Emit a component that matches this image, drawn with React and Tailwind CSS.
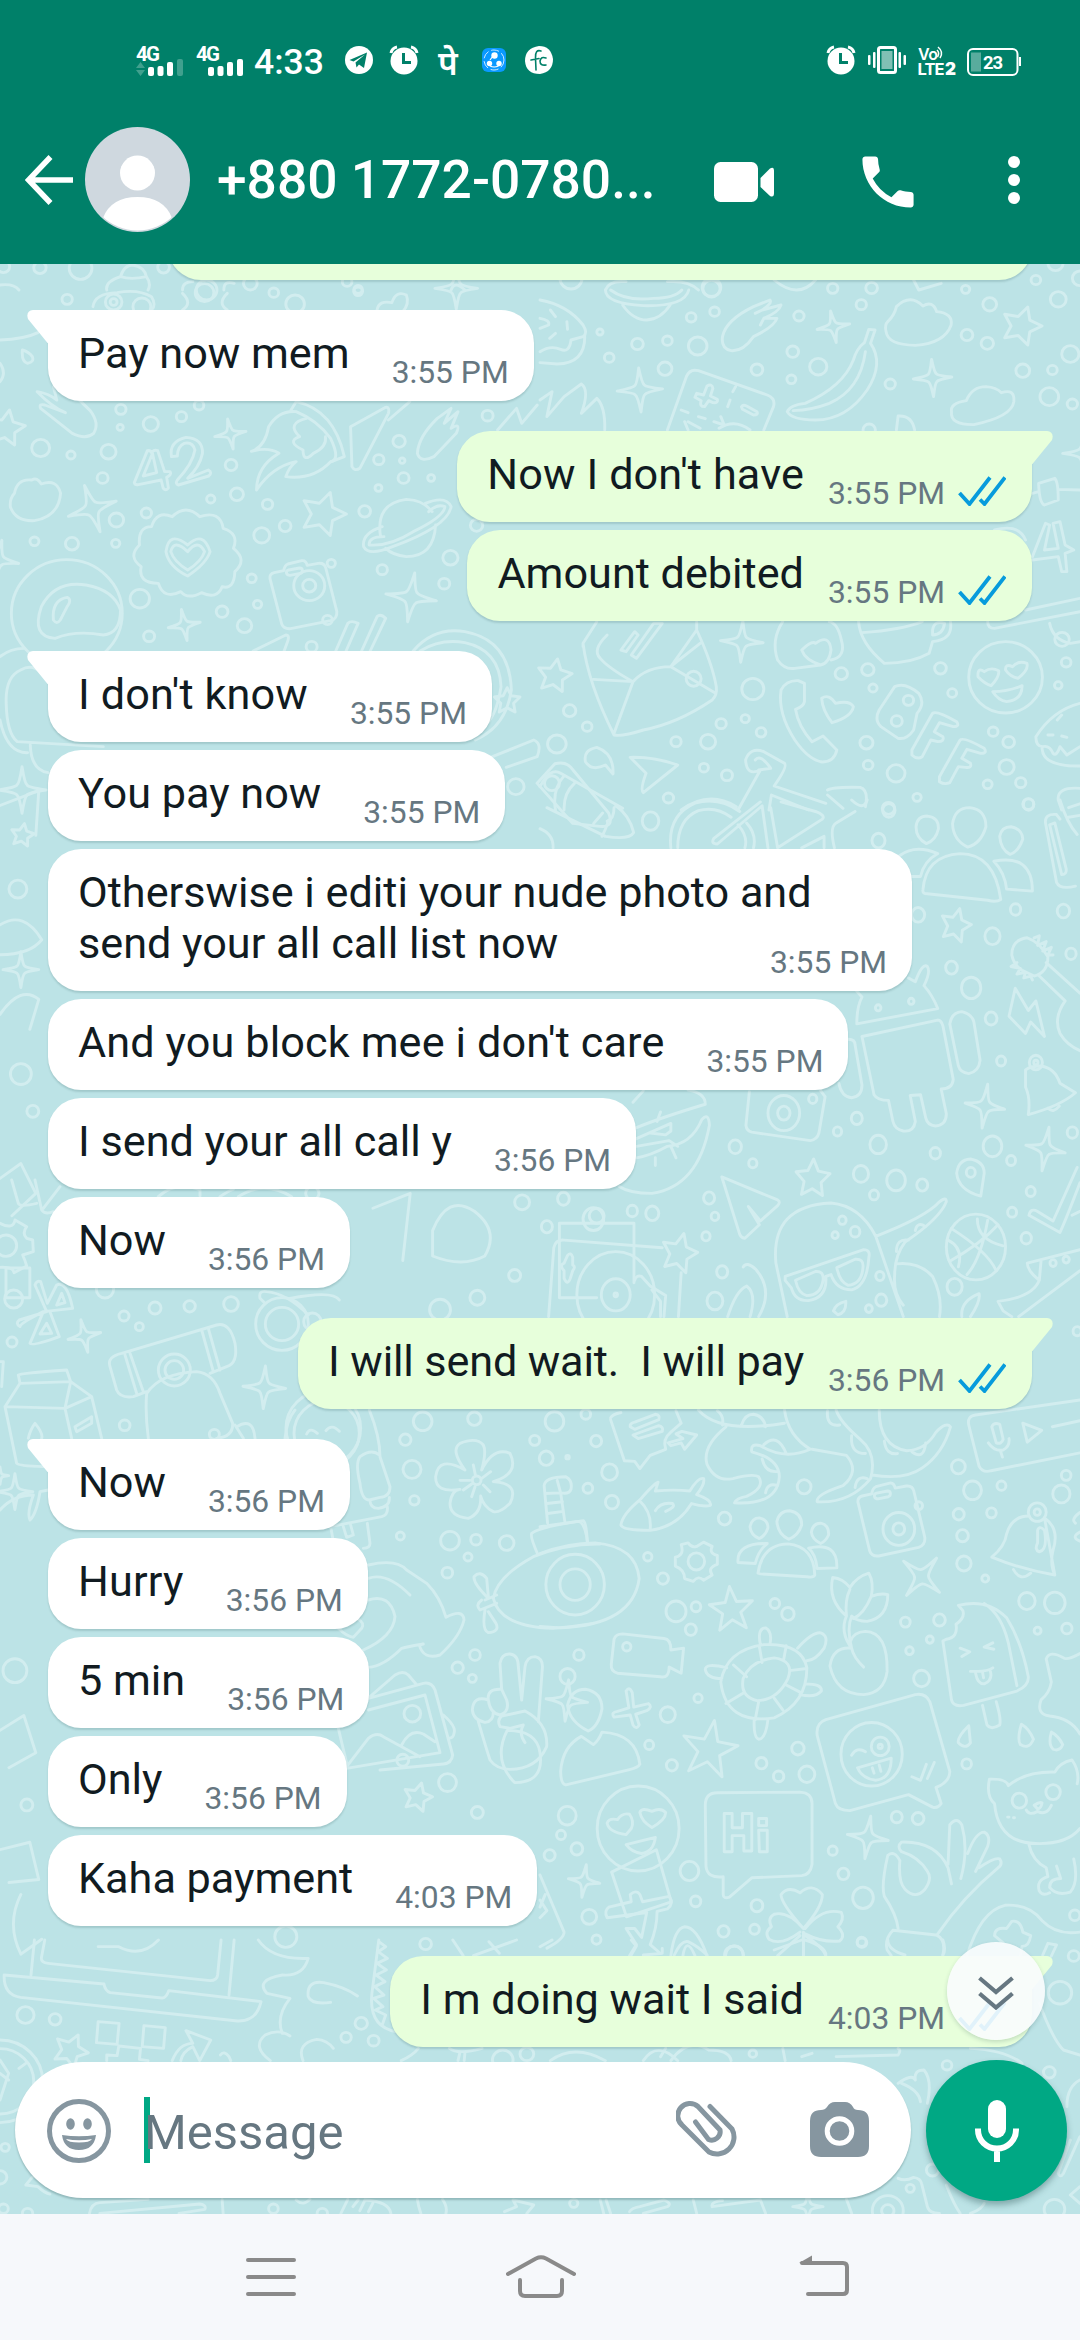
import React from "react";
import clsx from "clsx";

const messages = [
  { id: 1, out: true, hidden: true },
  { id: 2, text: "Pay now mem", time: "3:55 PM", first: true },
  { id: 3, out: true, text: "Now I don't have", time: "3:55 PM", first: true, tracking: "tracking-[0.13px]" },
  { id: 4, out: true, text: "Amount debited", time: "3:55 PM" },
  { id: 5, text: "I don't know", time: "3:55 PM", first: true, tracking: "tracking-[0.13px]" },
  { id: 6, text: "You pay now", time: "3:55 PM" },
  { id: 7, text: "Otherswise i editi your nude photo and\nsend your all call list now", time: "3:55 PM", wide: true },
  { id: 8, text: "And you block mee i don't care", time: "3:55 PM", tracking: "tracking-[0.12px]" },
  { id: 9, text: "I send your all call y", time: "3:56 PM" },
  { id: 10, text: "Now", time: "3:56 PM" },
  { id: 11, out: true, text: "I will send wait.  I will pay", time: "3:56 PM", first: true, tracking: "tracking-[-0.13px]" },
  { id: 12, text: "Now", time: "3:56 PM", first: true },
  { id: 13, text: "Hurry", time: "3:56 PM", tracking: "tracking-[0.2px]" },
  { id: 14, text: "5 min", time: "3:56 PM" },
  { id: 15, text: "Only", time: "3:56 PM" },
  { id: 16, text: "Kaha payment", time: "4:03 PM" },
  { id: 17, out: true, text: "I m doing wait I said", time: "4:03 PM", first: true },
];

/* ---------- wallpaper ---------- */

const starPath = (x, y, r, rot = 0, inner = 0.5) => {
  const pts = [];
  for (let i = 0; i < 10; i++) {
    const a = ((rot - 90 + i * 36) * Math.PI) / 180;
    const d = i % 2 ? r * inner : r;
    pts.push(`${(x + Math.cos(a) * d).toFixed(1)} ${(y + Math.sin(a) * d).toFixed(1)}`);
  }
  return `M${pts.join("L")}Z`;
};

const sparkPath = (x, y, r, rot = 0) => {
  const at = (deg, d) => {
    const a = ((rot + deg - 90) * Math.PI) / 180;
    return `${(x + Math.cos(a) * d).toFixed(1)} ${(y + Math.sin(a) * d).toFixed(1)}`;
  };
  let d = `M${at(0, r)}`;
  for (let i = 0; i < 4; i++) d += `Q${at(i * 90 + 22, r * 0.3)} ${at(i * 90 + 45, r * 0.3)}Q${at(i * 90 + 68, r * 0.3)} ${at(i * 90 + 90, r)}`;
  return d + "Z";
};

const Zone = ({ x, y, sx = 1 / 2.904, sy = 1 / 3, rings = [], stars = [], sparks = [], paths = [] }) => (
  <g transform={`translate(${x} ${y}) scale(${sx} ${sy})`}>
    {rings.map(([cx, cy, r], i) => (
      <circle key={i} cx={cx} cy={cy} r={r} vectorEffect="non-scaling-stroke" />
    ))}
    {stars.map((s, i) => (
      <path key={i} d={starPath(...s)} vectorEffect="non-scaling-stroke" />
    ))}
    {sparks.map((s, i) => (
      <path key={i} d={sparkPath(...s)} vectorEffect="non-scaling-stroke" />
    ))}
    {paths.map((d, i) => (
      <path key={i} d={d} vectorEffect="non-scaling-stroke" />
    ))}
  </g>
);

const cameraPath =
  "M0 32Q-2 18 12 14L40 8Q42 -8 52 -12L92 -22Q104 -24 108 -8L140 -14Q158 -16 162 0L194 130Q196 152 176 158L60 182Q40 184 34 168ZM48 16Q46 8 54 6L86 0Q94 0 94 8Q94 14 88 16L58 22Q50 22 48 16Z";

const Wallpaper = () => (
  <svg className="absolute inset-0 h-[1950px] w-[1080px]" viewBox="0 264 1080 1950" fill="none" stroke="#d2edef" strokeWidth="2.9" strokeLinecap="round" strokeLinejoin="round">
    <Zone
      x={0}
      y={290}
      rings={[[195, 28, 15], [594, 8, 27], [795, 8, 14], [857, 42, 27], [1040, 4, 13], [351, 358, 15], [349, 412, 9], [438, 402, 22], [527, 380, 15], [578, 346, 14], [118, 474, 26], [206, 495, 12], [315, 485, 22], [298, 564, 16], [671, 525, 17], [688, 613, 19], [612, 627, 12], [1159, 454, 18], [1100, 509, 15], [1168, 512, 8], [1172, 564, 16], [1099, 594, 10], [1252, 564, 10], [1416, 377, 16], [425, 669, 15], [338, 690, 21], [777, 643, 15], [760, 736, 23], [828, 708, 17], [1059, 664, 17], [100, 754, 13], [209, 761, 19], [336, 760, 12], [731, 865, 13], [1110, 839, 15], [1308, 803, 22], [1290, 881, 16], [406, 926, 28], [645, 965, 17], [748, 943, 12], [710, 1007, 21], [433, 1039, 16], [951, 990, 14], [905, 1070, 16], [962, 820, 12], [898, 887, 19], [898, 887, 45], [1384, 706, 18], [1498, 1490, 24], [330, 36, 24], [330, 36, 10], [412, 50, 26], [194, 970, 161]]}
      stars={[[18, 415, 56, 10], [938, 672, 68, 18]]}
      sparks={[[1325, -5, 62, 0], [669, 432, 46, -10], [268, 656, 73, -18], [535, 1005, 47, -10], [1194, 922, 74, 8], [64, 1500, 70, 0], [-5, 810, 60, 10]]}
      paths={[
        "M0 150Q70 148 110 128",
        "M65 180Q62 215 80 220Q100 216 94 200Q85 186 65 180ZM0 220Q20 250 0 275",
        "M270 50Q275 10 340 8Q400 -4 440 20Q455 45 440 60",
        "M530 10Q560 40 530 60M660 10Q630 40 660 60",
        "M1095 60Q1100 30 1138 38Q1150 0 1180 15Q1190 40 1170 65",
        "M108 305Q140 310 165 330L155 290M118 355Q112 340 130 345L190 368Q150 350 108 305M118 355L210 430Q250 450 272 430Q290 400 262 362L220 320",
        "M428 482L390 578Q392 586 402 584L468 570L474 595Q482 604 489 594L484 562Q500 554 494 545L478 545L458 482Q448 478 442 486L455 548L416 558L442 492Q438 480 428 482Z",
        "M498 500Q490 455 540 442Q590 445 588 490Q580 530 545 565L605 540Q618 548 606 558L518 585Q508 582 515 570Q560 520 566 480Q560 455 535 460Q515 470 515 498Z",
        "M745 600Q745 530 810 490Q780 470 730 484Q770 470 780 410Q810 360 860 365Q920 390 960 445Q990 510 960 515Q910 570 830 560Q840 530 860 515Q790 530 745 600Z",
        "M890 385Q830 400 870 440Q830 455 880 480Q880 520 910 490Q950 470 945 440M845 360L860 335Q970 360 1000 500L962 515",
        "M1018 410L1120 352Q1132 350 1128 370L1045 535Q1030 545 1022 530ZM1128 390L1190 335M1445 420L1500 355L1515 400L1560 345",
        "M1212 490Q1215 440 1270 385L1310 355L1290 400L1330 365L1310 415Q1340 395 1325 430L1260 500Q1220 520 1212 490Z",
        "M42 610Q50 565 92 570Q108 560 120 582Q165 565 176 610Q170 680 100 692Q45 695 30 650Q28 625 42 610Z",
        "M500 680Q540 640 580 680Q640 660 648 715Q695 730 678 775Q720 810 682 845Q680 900 645 890Q630 930 585 908Q545 930 525 905Q475 930 460 880Q400 880 410 830Q370 800 405 765Q400 710 440 710Q455 660 500 680Z",
        "M545 765Q590 720 610 785Q600 820 545 858Q490 830 482 785Q490 720 545 765ZM545 785Q575 745 594 785Q585 815 545 840Q505 815 496 785Q505 745 545 785Z",
        "M1105 740Q1090 640 1180 628Q1230 630 1255 665M1265 705Q1260 800 1180 800Q1140 795 1120 775M1110 710Q1050 730 1056 770Q1070 800 1140 770Q1300 710 1310 650Q1295 615 1235 640M1115 740Q1070 740 1072 765Q1130 770 1200 725Q1290 680 1292 650Q1270 640 1245 665",
        "M160 1045Q90 1040 120 950Q160 870 250 885Q330 900 350 960Q350 1030 300 1035Q220 1020 160 1045ZM155 990Q150 930 195 922Q210 930 195 950L175 990Q165 1005 155 990Z",
        "M0 1100Q30 1075 70 1075M60 1140Q95 1120 120 1150M60 1140Q15 1160 18 1240Q20 1330 50 1355L300 1370M0 1290Q20 1390 80 1388M88 1365Q90 1440 140 1448",
        "M735 1083L830 1035Q842 1035 835 1055L825 1083M975 1083L1010 1000Q1020 990 1040 1000L1005 1083M1050 1083L1095 980Q1105 970 1120 985L1075 1083",
        "M1200 1083Q1260 1010 1350 1025Q1480 1050 1485 1200Q1470 1310 1380 1350M1220 1083Q1280 1045 1350 1058Q1450 1080 1455 1190Q1440 1290 1400 1310M1430 1400L1550 1350Q1575 1360 1560 1400L1470 1432",
      ]}
    />
    <g transform="translate(270 572) scale(0.3444 0.3333)">
      <path d={cameraPath} transform="translate(0 -12) rotate(0)" vectorEffect="non-scaling-stroke" />
    </g>
    <Zone
      x={540}
      y={290}
      rings={[[498, -4, 25], [439, 82, 14], [507, 65, 14], [174, 126, 9], [283, 162, 17], [370, 152, 14], [458, 168, 27], [201, 203, 14], [363, 236, 20], [752, 78, 15], [933, 44, 15], [734, 185, 17], [630, 239, 17], [730, 268, 13], [808, 230, 25], [1017, 282, 15], [1306, 43, 20], [1240, 135, 17], [1299, 160, 18], [1505, 28, 23], [1402, 242, 20], [1488, 240, 14], [1540, 192, 25], [1479, 320, 27], [1546, 342, 15], [956, 420, 18], [875, 1151, 18], [952, 1139, 18], [967, 1194, 12], [1163, 1135, 17], [1197, 1209, 13], [1516, 1048, 21], [1528, 1117, 14], [1505, 1186, 11], [618, 1197, 32], [526, 1301, 15], [596, 1286, 12], [642, 1327, 14], [488, 1355, 22], [395, 1355, 15], [476, 1433, 13], [543, 1456, 16], [373, 1524, 15], [86, 1262, 18], [137, 1310, 14], [49, 1362, 27], [948, 1358, 19], [953, 1425, 14], [1034, 1450, 26], [1095, 1522, 12], [1316, 1325, 14], [1361, 1356, 17], [1355, 1431, 22], [1396, 1478, 15], [1300, 1483, 13], [1418, 1542, 16], [1352, 1162, 107], [1070, 1231, 15], [1036, 1293, 16], [1012, 1555, 18]]}
      stars={[[1398, 108, 60, 18], [42, 1158, 52, 10]]}
      sparks={[[290, 300, 66, -3], [852, 110, 48, -10], [1140, 264, 56, -3], [586, 1055, 62, 3], [1580, 490, 62, 0]]}
      paths={[
        "M190 0Q190 40 300 47Q420 50 432 0M240 45Q270 90 310 90Q350 88 378 45M205 0Q250 35 330 25Q390 25 412 0",
        "M0 30Q80 45 125 105Q140 130 125 140L90 150Q85 190 60 178Q30 165 0 185M130 140Q130 220 50 222L0 218M0 85Q30 90 25 105L0 115M30 60L45 80M78 95L80 118M28 145L45 130",
        "M530 140Q540 90 620 50L668 30Q675 40 645 60L700 45Q695 65 650 85L688 85Q680 110 620 140Q590 185 555 182Q525 175 530 140ZM625 70L645 60M640 105L650 85",
        "M1010 95Q1030 75 1035 50Q1075 10 1112 48Q1140 30 1152 65Q1200 70 1194 105Q1175 160 1090 166Q1010 165 1005 125Q1000 105 1010 95Z",
        "M955 118L973 120L960 160Q1000 220 950 300Q890 390 800 390Q730 390 718 365Q725 345 770 340Q880 290 910 210Q920 175 942 158ZM945 185Q930 300 840 340Q790 360 735 362",
        "M1195 365Q1190 340 1238 332Q1255 290 1295 290Q1325 292 1340 308Q1380 295 1376 335Q1370 380 1260 404Q1190 405 1195 365Z",
        "M370 420L425 260Q435 235 460 242L660 315Q685 325 678 350L650 420M455 310L475 315L485 288Q500 280 502 295L495 318L515 328Q518 340 502 338L490 332L478 350Q462 350 468 332L450 322ZM585 350Q590 342 600 348L630 365Q635 375 620 375L588 358ZM568 290L560 305M552 330L545 350M410 360L430 368M460 380L480 386M505 395L535 405L525 380M420 395L430 420M430 395L465 415M520 415Q565 385 610 420",
        "M0 330L35 305L20 380L70 320L120 282Q145 300 120 370L165 325Q190 350 188 420",
        "M1035 420L1040 378Q1080 375 1088 420",
        "M1430 610L1448 605M1448 580L1495 565Q1505 575 1505 630L1465 645Q1450 640 1448 580ZM1505 598L1568 600M1430 800L1468 700L1480 705L1465 780L1505 775L1490 700L1510 695L1525 765L1550 780L1525 790L1530 845L1515 845L1505 800L1430 810",
        "M1320 720Q1390 700 1410 750M1410 960L1568 925M1300 995Q1300 1015 1320 1015L1568 965",
        "M165 995L125 1060Q140 1180 215 1335Q240 1340 300 1320Q400 1300 500 1230Q515 1215 512 1190Q500 1120 455 1020L455 995M125 1060L125 1070M195 1035Q150 1080 175 1105Q200 1135 270 1175Q310 1130 380 1130L455 1020M270 1175L215 1330M155 1168L270 1175M380 1130L510 1210M385 1125L465 1060M235 1080L275 1025L285 1035L250 1085ZM265 1095L330 1000L355 1000L280 1105Z",
        "M760 1080Q790 1050 800 1060Q840 1030 845 1080Q840 1120 815 1125Q770 1110 760 1080ZM705 995Q670 1050 690 1110Q710 1140 740 1135L815 1125M845 1110Q890 1100 875 1050Q865 1000 840 995",
        "M925 995Q930 1060 1000 1120Q1080 1120 1130 1090L1140 1055Q1200 1050 1192 995M935 1028Q1050 1020 1110 995M1140 1020Q1145 990 1175 1000Q1170 1035 1140 1035ZM1480 1000Q1490 1050 1540 1060L1568 1055",
        "M1290 1145Q1270 1130 1272 1160Q1290 1180 1310 1187Q1335 1160 1332 1142Q1310 1130 1290 1145ZM1372 1130Q1350 1120 1352 1140Q1365 1160 1388 1165Q1420 1140 1414 1120Q1390 1110 1372 1130ZM1315 1205Q1360 1205 1400 1187Q1400 1230 1355 1235Q1330 1230 1315 1205Z",
        "M700 1200Q715 1170 750 1172L768 1180V1235Q765 1250 742 1258Q750 1310 790 1355L822 1338L862 1380Q855 1415 820 1416Q780 1410 740 1350Q690 1270 700 1200ZM818 1225Q840 1210 858 1240Q900 1230 910 1250Q905 1280 848 1298Q820 1260 818 1225Z",
        "M985 1260L1030 1190Q1060 1175 1100 1210Q1120 1240 1095 1270L1085 1320Q1065 1350 1040 1345L990 1310Q970 1290 985 1260ZM1080 1380L1140 1270Q1150 1260 1210 1295Q1220 1310 1200 1310L1160 1298L1145 1325L1170 1340Q1175 1355 1155 1355L1135 1350L1110 1400Q1095 1410 1080 1395ZM1160 1460L1220 1350Q1230 1340 1290 1375Q1300 1390 1280 1390L1240 1378L1225 1405L1250 1420Q1255 1435 1235 1432L1215 1430L1190 1478Q1175 1485 1160 1475Z",
        "M1568 1240Q1490 1260 1440 1340Q1440 1370 1460 1370Q1480 1365 1490 1390Q1500 1400 1510 1370L1530 1395L1568 1370M1458 1375Q1460 1430 1568 1428M1502 1290L1515 1275M1475 1335H1490M1515 1338L1530 1342",
        "M212 1452Q215 1390 165 1372Q125 1380 132 1415Q150 1445 190 1425ZM262 1402Q330 1400 400 1425L300 1508Q290 1500 308 1450ZM0 1490Q30 1430 60 1450L240 1555M45 1560Q35 1500 68 1460M70 1560Q68 1510 100 1480",
        "M575 1560L640 1440Q600 1460 597 1410Q610 1370 650 1385L710 1420Q720 1430 680 1488L830 1540M635 1440L670 1435Q640 1390 625 1410M410 1560Q490 1500 570 1550M665 1560L672 1515L780 1560M835 1500Q850 1490 930 1492Q955 1500 945 1550M835 1515L880 1555M1568 1495Q1500 1490 1505 1530L1515 1560",
      ]}
    />
    <Zone
      x={540}
      y={800}
      sy={0.3827}
      rings={[[321, 55, 24], [1013, 27, 18], [983, 106, 19], [1419, 12, 15], [1381, 286, 15], [1520, 290, 18], [1314, 356, 22], [1098, 300, 19], [1195, 438, 17], [1252, 491, 28], [1310, 571, 17], [1542, 402, 15], [982, 543, 8], [1078, 526, 8], [1339, 682, 13], [920, 832, 16], [864, 866, 12], [982, 900, 24], [567, 906, 18], [618, 949, 12], [1148, 923, 15], [1314, 905, 27], [1368, 942, 13], [1546, 869, 15], [932, 977, 22], [1034, 994, 27], [1110, 1006, 16], [970, 1032, 13], [1251, 973, 13], [1425, 1023, 13], [1371, 1077, 13], [1412, 1145, 15], [1204, 1272, 22], [68, 1042, 17], [20, 1115, 16], [155, 1095, 30], [268, 1074, 15], [326, 1080, 19], [491, 1040, 16], [508, 1088, 11], [482, 1140, 12], [529, 1233, 16], [508, 1309, 23], [878, 1098, 11], [857, 1137, 9], [915, 1128, 14], [987, 1244, 12], [991, 1307, 16], [955, 1329, 10], [708, 818, 46], [708, 818, 18], [792, 781, 12], [220, 1293, 113], [220, 1293, 42], [220, 1293, 5], [1266, 1168, 86], [1490, 1210, 9], [1528, 1201, 9], [1440, 686, 19], [1440, 686, 6], [1560, 1388, 12]]}
      stars={[[1207, 328, 46, 15], [792, 990, 52, 3], [404, 1185, 54, 15]]}
      sparks={[[1292, 800, 58, 8], [1468, 912, 58, 10]]}
      paths={[
        "M20 20L190 95Q260 105 272 85Q260 40 220 15M180 95Q200 60 195 55Q215 50 215 20M0 75Q40 90 38 125",
        "M380 125Q370 40 450 8Q520 -10 580 30M400 125Q400 50 460 28Q510 15 555 45M575 65Q605 95 595 125M600 60Q630 90 620 125M640 5L505 100Q495 115 515 115L645 15L662 125M670 20L690 125L820 50Q830 40 800 30L700 5M760 125L825 95V125M855 125Q840 70 860 60L915 30M905 0Q940 30 950 0",
        "M1092 70Q1095 42 1125 42Q1158 45 1157 75Q1150 105 1122 114Q1092 100 1092 70ZM1198 62Q1205 20 1248 20Q1295 25 1295 70Q1280 115 1242 123Q1200 105 1198 62ZM1335 95Q1340 70 1368 70Q1400 75 1402 102Q1390 135 1365 142Q1338 130 1335 95ZM1045 145Q1090 115 1155 140Q1115 160 1105 200H1080M1112 235Q1120 145 1220 140Q1320 140 1338 260Q1325 268 1300 262L1125 245Q1110 245 1112 235ZM1318 160Q1430 140 1430 238L1355 233Q1350 190 1318 160Z",
        "M1468 60Q1465 35 1500 38L1510 50M1468 60L1500 215Q1510 235 1555 225M1480 65L1515 195Q1530 195 1528 180L1495 60ZM1510 0Q1530 60 1560 90M1535 20L1568 10M1535 45L1568 40",
        "M920 500L935 515Q920 540 920 585L1155 545Q1140 510 1115 485Q1135 450 1125 435Q1110 425 1090 475L1070 465M935 618L1155 575Q1165 575 1170 590L1200 730Q1198 755 1165 755L1180 820Q1180 850 1148 852Q1125 850 1120 830L1105 770L1075 772L1090 840Q1085 868 1055 865Q1030 860 1025 840L1012 785Q980 785 970 770ZM1190 585Q1195 555 1225 553Q1255 560 1260 580L1278 680Q1275 710 1245 715Q1220 712 1215 695ZM895 625Q915 625 915 640L935 745Q935 775 905 778Q875 775 868 740",
        "M1370 405Q1370 365 1415 360Q1450 370 1475 410Q1475 450 1435 460L1400 445Q1375 430 1370 405ZM1435 360L1450 355L1445 380L1470 370L1460 395L1485 385L1475 405L1490 405M1385 425L1368 435L1395 440L1385 455L1410 450L1405 465L1425 460L1430 470M1470 425L1568 505M1450 460L1525 525Q1490 570 1510 610Q1530 640 1568 655",
        "M1380 492L1362 565L1410 610L1425 580L1465 618L1440 525L1418 550ZM1410 705Q1425 695 1455 695Q1495 700 1510 740L1555 765Q1510 800 1418 822Q1425 780 1410 750ZM1475 805Q1490 820 1508 800",
        "M275 858Q350 830 480 795Q480 765 430 758M270 790L300 760M280 885L380 845V865L365 875L320 870M350 815L340 840M280 905L375 890L400 905M335 935V955M380 905L395 935M230 1010Q260 1028 325 1028Q460 1010 492 850Q490 815 470 835Q440 900 370 905Q320 930 280 935",
        "M608 762L598 850Q600 865 615 868L785 890Q805 888 810 870L828 775L815 760",
        "M528 985L690 1045Q700 1050 690 1060L640 1100L605 1062L637 1110L595 1145Q585 1145 580 1135ZM1210 975Q1215 940 1250 938Q1290 945 1290 975L1280 1035Q1215 1020 1210 975Z",
        "M25 1350L40 1170Q45 1148 70 1150L355 1170M80 1190Q90 1180 95 1195V1215Q105 1220 95 1230L88 1250Q80 1270 70 1250V1230Q55 1215 70 1210ZM275 1255Q280 1240 295 1245L320 1270L365 1295L360 1350M410 1235L402 1350M325 1280L350 1310V1350M545 1350Q570 1280 600 1270Q630 1290 610 1350M590 1220Q600 1205 625 1225Q680 1280 635 1350",
        "M718 1350L685 1210Q670 1060 845 1053Q930 1060 975 1140L1055 1350M712 1245L940 1175Q960 1175 955 1195Q950 1270 905 1280Q860 1280 845 1240L830 1245Q835 1300 780 1308Q740 1310 730 1275L712 1255ZM742 1255L800 1232Q825 1230 822 1255Q815 1295 775 1295Q750 1290 742 1255ZM862 1222L915 1200Q940 1198 938 1220Q935 1265 895 1268Q870 1260 862 1222ZM852 1335Q860 1315 888 1310Q890 1340 865 1345ZM975 1140Q1120 1090 1160 1050Q1180 1035 1180 1050Q1160 1095 1060 1155Q1030 1190 1030 1240Q1025 1290 1055 1320M1035 1180Q1035 1145 1070 1150M1090 1125Q1095 1100 1120 1115M1035 1212Q1100 1205 1140 1245Q1170 1300 1160 1350",
        "M1195 1120Q1300 1180 1325 1230M1190 1205Q1280 1160 1330 1110M1270 1095Q1270 1150 1345 1165M1215 1220Q1230 1170 1185 1150M1300 1098Q1280 1200 1240 1240M1420 1085Q1425 1065 1445 1075L1490 1100L1560 960M1420 1085L1510 1130Q1530 1090 1568 1000M1545 1085L1568 1075M1568 1175L1415 1210Q1415 1230 1450 1255Q1430 1300 1330 1310L1345 1335L1370 1350M1450 1255L1455 1205M1390 1350L1568 1230M1225 1350Q1220 1310 1275 1290Q1280 1310 1250 1350",
      ]}
    />
    <Zone
      x={540}
      y={1400}
      sy={0.3571}
      rings={[[42, 60, 27], [133, 40, 14], [163, 115, 16], [202, 202, 23], [209, 286, 19], [139, 247, 14], [18, 163, 20], [80, 160, 5], [767, 243, 20], [536, 332, 18], [1215, 187, 20], [1256, 253, 26], [1340, 240, 13], [1311, 316, 14], [1216, 320, 16], [1227, 380, 17], [1231, 458, 21], [1293, 500, 10], [1528, 211, 14], [1514, 263, 25], [1444, 314, 26], [1444, 314, 9], [1414, 563, 24], [1495, 568, 30], [1445, 646, 10], [1530, 640, 15], [313, 439, 12], [357, 500, 16], [395, 592, 29], [453, 579, 14], [438, 643, 16], [682, 570, 14], [720, 599, 18], [1061, 622, 14], [1160, 616, 17], [1132, 671, 10], [1073, 702, 11], [1108, 780, 23], [113, 714, 15], [80, 774, 22], [459, 835, 12], [371, 881, 22], [317, 966, 13], [383, 1023, 16], [749, 976, 18], [643, 1017, 16], [693, 1054, 15], [775, 1048, 23], [1239, 1019, 14], [1036, 1168, 16], [1098, 1172, 17], [850, 1262, 13], [881, 1327, 16], [938, 1394, 30], [79, 1164, 26], [61, 1218, 13], [28, 1275, 16], [107, 1257, 17], [434, 1319, 27], [452, 1404, 15], [630, 1416, 17], [533, 1488, 16], [623, 1482, 14], [164, 1511, 13], [934, 1517, 13], [1553, 1443, 15], [565, 1555, 26], [102, 517, 85], [102, 517, 44], [454, 452, 24], [252, 691, 12], [1042, 361, 46], [1042, 361, 17], [1100, 296, 11], [963, 992, 89], [988, 970, 26], [988, 970, 6], [285, 1200, 119], [1392, 1122, 21], [1490, 1098, 21]]}
      stars={[[556, 588, 66, -5, 0.42], [492, 980, 84, 10, 0.4]]}
      sparks={[[1108, 495, 68, 40], [952, 1225, 60, 8], [128, 1347, 46, 8]]}
      paths={[
        "M205 50Q210 40 235 35M205 55L245 170L275 172L290 192L320 155L365 138Q355 110 380 90L410 65L395 30M262 75Q260 65 275 62L335 40Q350 42 345 55L275 82ZM270 98L345 72Q360 75 355 88L285 108ZM372 120L415 108L395 95L412 88L455 98L420 138L410 120L380 128Z",
        "M460 28Q520 95 710 65M515 30Q535 45 530 70M585 70Q595 40 620 40Q650 45 655 75M540 75Q470 130 485 180Q510 230 560 220Q620 205 635 215Q655 245 600 270Q570 275 565 288Q690 295 695 215Q695 165 615 145Q610 120 640 128Q710 170 785 138Q720 100 710 28M790 138Q860 150 890 155Q930 200 880 240Q800 265 805 285Q900 290 960 220Q980 150 930 110Q870 60 860 28M835 30Q830 75 870 70M905 100Q900 150 945 150M650 125Q690 90 715 150M645 165Q655 205 690 200M655 260Q660 230 690 240M915 245Q920 210 950 220M985 28Q985 130 1065 142Q1120 140 1150 90Q1180 60 1192 75Q1170 150 1110 190Q1060 225 965 210M1000 115Q1005 155 1038 150M1080 145Q1115 170 1120 120",
        "M1245 70Q1240 45 1265 42L1568 0M1245 70L1275 185Q1285 205 1310 198L1568 148M1312 75Q1318 62 1335 68L1345 110Q1340 125 1325 120ZM1302 120Q1320 145 1345 140Q1365 130 1362 108M1337 142L1343 160M1402 65L1457 85L1415 118ZM1488 75L1568 58",
        "M12 240Q15 215 75 215Q95 225 90 250Q85 265 60 260L72 340M12 240L22 345M50 225L60 260M15 262L60 260M20 290L65 285M22 318L68 312M0 355L110 340Q130 340 138 398M0 430Q80 400 160 400Q280 410 288 500Q270 630 60 638L0 634",
        "M235 350Q240 320 290 280Q330 235 343 230L335 255Q390 250 435 255Q460 215 475 220Q480 235 455 265Q500 280 495 295Q475 300 440 290Q400 355 320 365Q240 365 235 350ZM290 283Q325 315 320 362M335 310Q350 285 385 290Q395 300 365 312",
        "M410 405L430 400Q440 415 455 410L475 398L500 410Q490 430 515 435V460Q485 470 500 490L475 505Q460 490 445 508L420 500Q420 475 393 465V440Q420 435 410 405Z",
        "M610 355Q615 330 637 330Q662 335 662 358Q655 380 637 388Q612 378 610 355ZM688 340Q695 310 725 310Q760 315 760 350Q750 380 722 390Q690 375 688 340ZM788 370Q792 345 815 345Q840 350 838 378Q830 395 815 402Q790 390 788 370ZM575 455Q570 400 660 402Q635 420 625 458ZM633 485Q645 405 720 403Q795 410 798 490Q795 498 775 495L640 487ZM780 415Q865 395 862 470L805 472Q800 430 780 415Z",
        "M1312 440Q1350 410 1355 375Q1370 325 1420 325M1465 330Q1510 360 1490 420Q1480 460 1495 490ZM1312 440Q1400 475 1495 490M1445 365Q1450 350 1465 365Q1475 420 1450 425Q1435 420 1445 400ZM1375 475Q1395 510 1425 485M1568 315Q1540 335 1555 345M1568 370Q1540 385 1568 395",
        "M890 605Q835 560 850 497Q880 500 900 525Q920 495 955 485Q970 510 962 550Q990 540 1010 545Q1010 610 950 620Q920 620 905 605Q890 640 905 695Q850 690 842 745Q860 825 940 825Q1000 820 1008 760Q1010 650 945 648Q910 650 902 675M900 530Q885 560 890 605Q870 650 905 695Q910 720 940 748M962 550Q940 600 910 612",
        "M215 670Q220 655 240 655L360 668Q380 670 380 700L417 695L410 765L375 748Q375 780 350 775L225 765Q205 760 207 740Z",
        "M525 790Q540 700 650 685Q760 680 775 750Q775 850 680 890Q540 910 525 790ZM590 780Q610 730 680 722Q740 730 720 780Q690 840 630 842Q580 830 590 780ZM637 690L645 735M715 688L708 725M775 752L730 757M755 818L715 798M705 868L680 835M625 895L635 845M540 850L592 820M562 742L600 775M640 685Q630 640 655 638Q675 650 668 682M748 695Q790 650 815 652Q840 660 825 695Q800 730 775 730M542 750Q480 735 480 755Q485 780 528 780M770 795Q820 795 817 815Q800 835 755 825M622 895Q620 945 635 950Q655 950 662 895",
        "M1180 670Q1215 665 1208 628Q1235 610 1228 590L1215 575Q1300 555 1355 610Q1400 680 1418 775Q1420 800 1385 815L1230 855Q1200 860 1195 840L1170 675ZM1290 570Q1340 600 1360 680L1385 800M1285 855L1298 910Q1310 925 1335 910Q1340 895 1325 845M1220 695L1248 705L1225 718M1315 680L1290 692L1318 698M1250 760H1270Q1300 760 1315 750M1265 765Q1270 795 1290 795Q1315 785 1308 760M1285 762L1288 778",
        "M1245 912Q1210 945 1215 960Q1235 980 1250 960ZM1398 908Q1385 950 1395 965Q1420 980 1433 950Q1420 920 1398 908ZM1485 930Q1475 965 1490 978Q1510 985 1518 965Q1505 940 1485 930ZM1568 710Q1530 730 1520 722Q1480 700 1470 725L1485 790Q1480 820 1455 840Q1440 880 1480 885Q1540 890 1568 935",
        "M80 855Q90 810 132 810Q180 818 180 865Q170 915 140 927Q85 900 80 855ZM75 1078Q60 1075 60 1040Q65 970 120 942L155 965Q170 955 180 930Q280 935 290 1020Q285 1030 260 1035ZM250 815Q260 800 268 820L272 860L315 850Q328 860 310 870L278 880L288 910Q280 925 270 910L262 882L215 888Q205 875 225 872L258 862Z",
        "M805 940Q800 905 830 895L1090 825Q1120 820 1132 845L1190 1040Q1190 1070 1150 1085L1165 1130Q1155 1145 1140 1140L1070 1105L900 1150Q865 1150 858 1130ZM922 1030L1020 1003Q1020 1060 975 1065Q935 1060 922 1030ZM905 995Q920 970 945 985M965 1030L970 1045M985 1022L990 1040M1080 1055L1105 1065L1122 1020M1145 1015L1125 1060",
        "M195 1185Q200 1170 225 1175Q240 1155 260 1160Q275 1180 265 1200L250 1217Q200 1210 195 1185ZM290 1155Q295 1140 325 1152Q350 1140 365 1155Q365 1175 325 1197Q295 1180 290 1155ZM250 1245L335 1225Q330 1265 295 1270Q265 1265 250 1245Z",
        "M480 1135Q480 1100 515 1100L755 1098Q790 1100 790 1130V1300Q785 1330 760 1332L615 1338L550 1392Q532 1398 532 1385V1335Q485 1340 482 1305ZM535 1158H558V1198H588V1158H615V1263H592V1220H558V1265H535ZM635 1172H658V1192H635ZM635 1205H660V1265H637Z",
        "M1360 1080Q1355 1060 1305 1062Q1295 1110 1320 1130Q1330 1240 1440 1242Q1530 1245 1568 1200M1360 1080Q1410 1040 1495 1042Q1510 1015 1545 1008Q1568 1040 1560 1075M1435 1135Q1450 1125 1458 1128Q1455 1145 1445 1145ZM1412 1148Q1420 1165 1445 1152Q1470 1165 1485 1135M1358 1168H1362M1375 1170H1378M1420 1245Q1430 1290 1470 1310L1475 1335Q1440 1345 1450 1375Q1460 1390 1480 1380M1500 1305L1512 1340Q1480 1340 1480 1365Q1500 1390 1540 1378Q1565 1350 1550 1285",
        "M1040 1480Q1035 1440 1000 1390Q990 1360 1010 1275Q1030 1260 1045 1290Q1040 1350 1060 1370Q1090 1400 1118 1370Q1140 1340 1125 1320Q1100 1280 1050 1265Q1035 1250 1050 1238Q1150 1235 1185 1310L1195 1355M1185 1300L1190 1190Q1210 1165 1225 1190Q1245 1260 1222 1340M1242 1270Q1265 1210 1290 1210Q1310 1220 1300 1250L1265 1320M1275 1310Q1320 1280 1335 1285Q1345 1300 1330 1310Q1230 1390 1155 1495M1025 1485L1150 1498Q1180 1510 1170 1555M1025 1485Q1000 1510 1008 1540L1020 1556M1240 1556Q1280 1430 1350 1415Q1420 1410 1460 1460Q1500 1500 1568 1490M1320 1500Q1320 1475 1355 1480L1370 1460Q1395 1455 1402 1490L1425 1500Q1420 1530 1400 1530L1395 1556M1320 1500L1345 1520",
        "M765 1480Q700 1410 700 1385Q720 1360 755 1380Q790 1350 820 1385Q820 1420 765 1480Q720 1430 680 1440Q660 1450 672 1475Q650 1490 665 1510Q700 1530 755 1490M770 1480Q820 1420 875 1435Q885 1455 865 1475Q890 1500 870 1515Q820 1520 770 1495M765 1490V1556M755 1500L690 1556M770 1500Q820 1530 830 1556",
        "M200 1420L265 1405L262 1385Q280 1370 290 1385L298 1405L375 1390Q390 1410 370 1425L340 1432Q340 1480 320 1525L350 1550M200 1420Q185 1430 195 1450L310 1435L295 1505L275 1480L250 1480L280 1525L260 1556M380 1556Q390 1480 420 1475Q455 1475 485 1556M415 1556Q425 1500 450 1556M0 1330L70 1490Q70 1510 20 1535M0 1420L15 1385M0 1450L20 1430L0 1400",
      ]}
    />
    <g transform="translate(858 1491) scale(0.3444 0.3571)">
      <path d={cameraPath} vectorEffect="non-scaling-stroke" />
    </g>
    <Zone
      x={280}
      y={1410}
      sx={1 / 3}
      rings={[[428, 34, 28], [583, 26, 20], [376, 89, 17], [396, 178, 27], [403, 271, 14], [361, 378, 12], [510, 392, 28], [588, 389, 16], [680, 399, 22], [564, 441, 12], [502, 488, 16], [590, 211, 13], [585, 735, 16], [533, 773, 17], [577, 805, 12], [397, 911, 25], [140, 70, 98], [764, 91, 15]]}
      paths={[
        "M15 85Q20 30 45 0M80 72Q90 50 112 70M138 62Q155 40 178 64M268 0Q300 80 300 140L330 230Q330 260 300 262L268 270Q245 270 240 220Q225 160 240 140Q275 115 298 135M270 270Q270 295 295 295Q330 290 328 262M322 290Q325 315 305 320L150 350M152 350L158 383M190 350L200 382L220 375L212 345M262 340L270 400Q270 415 250 415",
        "M555 180Q510 120 540 100Q590 80 610 105Q620 125 605 180Q640 110 690 130Q720 190 640 215Q720 220 690 280Q660 310 640 305Q610 290 602 258Q605 310 565 325Q510 320 510 280Q515 240 540 238Q465 250 467 200Q475 135 555 180ZM580 165L586 195M540 211H570M550 240L575 222M575 260L585 230M610 225L630 245M605 205L632 185",
        "M265 465Q350 445 380 480L440 520Q480 560 498 622Q550 595 552 630Q540 680 480 735Q430 750 418 705L430 702Q380 710 365 715Q310 770 265 772M265 505Q320 485 390 555M265 570Q330 550 345 620Q340 680 250 720M175 655Q200 680 220 682L245 655Q255 640 235 628",
        "M615 570L650 555M640 565Q650 500 760 440Q860 400 960 402M640 565Q660 650 820 655Q880 650 940 640M772 430Q750 380 755 370Q780 350 910 332Q920 340 922 400M620 560Q580 520 582 500Q600 480 620 505L625 560M650 580L600 600Q585 585 605 570M615 600Q605 660 625 668Q660 665 648 640L625 605",
        "M270 860L345 795Q370 780 385 795L408 822M265 865L430 820Q455 815 465 840L518 1035Q515 1060 490 1062L300 1080M265 900L435 855L480 1028L200 1075M175 955L200 1060M200 1070L265 985Q290 965 310 980L420 1040M365 1005Q390 955 430 972L465 995M490 915Q530 950 522 970Q520 985 505 985",
        "M665 838L660 760Q665 730 690 732Q715 735 715 770L725 870L735 770Q740 740 765 740Q790 745 787 775L775 935M665 838Q620 835 625 870Q630 910 660 915Q690 905 680 870ZM625 870Q580 855 577 900Q580 930 615 937Q640 935 640 905M595 935Q620 1020 630 1050Q650 1078 690 1078Q770 1078 800 1010Q805 940 735 903L665 918Q650 930 660 950L690 955L730 945Q715 970 735 998",
      ]}
    />
    <Zone
      x={0}
      y={1180}
      sx={1 / 3}
      rings={[[41, 357, 27], [36, 486, 15], [18, 197, 32], [315, 328, 26], [372, 408, 15], [418, 440, 12], [465, 384, 18], [569, 379, 17], [693, 372, 22], [374, 736, 16], [643, 763, 15], [523, 570, 48], [523, 570, 28], [846, 432, 79], [846, 432, 50], [937, 425, 26], [937, 40, 20], [970, 745, 112]]}
      sparks={[[253, 468, 50, -12], [793, 622, 64, 3], [0, 887, 26, 0]]}
      paths={[
        "M35 0L55 70Q60 82 110 70M105 0L125 90Q135 105 160 95M130 85L180 20M475 50Q530 0 600 30V48M660 50Q690 30 700 28M715 50Q790 0 875 50M0 130Q40 150 45 120L80 140Q65 160 80 175L98 180L100 215L68 225Q75 240 80 258L42 278Q40 260 0 262",
        "M122 305L142 370L170 315Q200 300 218 385L130 395Q60 430 60 440Q45 430 58 420L140 395L105 315Q110 300 122 305ZM130 395L90 490Q95 500 178 470L150 395M140 430L155 460L120 462ZM170 375L185 340L195 368Z",
        "M330 560Q320 530 365 520L650 435Q690 425 705 490Q715 550 680 560L630 580M330 560L350 630Q360 655 400 650L440 635M375 525L410 640M390 520L430 635M605 450L640 575M625 445L660 570",
        "M445 775Q435 700 440 640Q480 580 590 575Q640 580 660 640L698 730Q700 770 650 775M705 735L730 775M710 740Q760 710 765 775M780 355Q775 330 800 335Q860 340 925 405M780 355L795 370M870 355Q1000 330 1018 360",
        "M15 680L60 610L55 585Q60 580 200 570L212 605L275 650L305 775M15 680L50 850Q55 858 130 860M15 680L195 685L275 650M195 685L215 775M195 685L212 605M60 610L212 605M85 775Q90 750 105 730Q130 760 125 775M225 740L275 710V730L230 755ZM0 545L10 545L5 620M0 990Q40 945 100 945Q80 1000 90 1020Q110 1000 120 935L145 930",
      ]}
    />
    <Zone
      x={0}
      y={1940}
      rings={[[74, 225, 25], [160, 238, 17], [1049, 250, 18], [1005, 292, 15], [1085, 302, 16], [1236, 12, 17], [15, 622, 12], [10, 806, 14], [80, 820, 15], [794, 806, 14], [936, 820, 15], [1460, 360, 30], [1530, 342, 20], [830, -10, 32], [0, 712, 20], [0, 424, 124], [0, 424, 98]]}
      stars={[[205, 332, 52, 25]]}
      paths={[
        "M100 0L90 105M130 0L120 55Q120 68 140 70L610 122Q630 122 632 105L642 0M680 0L665 165M12 105Q10 165 60 172L690 243Q745 245 758 185L490 152Q482 175 470 174L320 158Q305 152 302 132L12 105M285 20L345 20Q410 55 460 0",
        "M750 0Q790 60 895 55Q880 110 820 105Q740 120 775 160L842 175Q800 230 820 280M895 170Q890 120 940 128Q1000 140 1038 168M895 170Q905 195 960 187M842 288Q810 265 770 285Q730 320 785 362M880 362Q860 310 920 298Q950 300 968 325",
        "M1100 0L1080 160Q1070 260 1150 275M1100 5L1120 20L1098 35L1125 55L1095 70L1122 90L1092 105L1118 125L1088 140L1115 165L1085 175L1112 200L1090 210L1120 225L1110 255M1315 0L1345 47M1375 47L1500 0M1420 5L1450 40",
        "M285 245L346 250L340 313L280 308ZM418 257L480 263L475 325L413 320ZM310 362V345L340 347L345 318L408 325L405 358L430 362M500 362Q520 310 560 310L540 272L612 300L580 362L560 320Q530 335 525 362M640 345Q650 330 665 350L670 362",
        "M260 820Q265 790 290 788L430 778M290 820L580 792Q600 795 595 808L520 820M645 778L648 820M860 780Q880 800 900 778M1010 778L990 820M1040 780L1025 800M1060 780L1045 812M1085 785L1070 815M1060 780Q1130 785 1135 820M1212 778Q1215 800 1222 820M1285 778Q1300 800 1295 820M1465 815L1500 800L1490 780L1550 795L1530 820M75 735L95 710M75 735L110 740Q130 760 145 762M0 360L25 400L0 480M55 385L75 370M0 400L25 420",
        "M1165 362Q1200 345 1215 325M1305 325Q1330 345 1400 325M1335 340L1330 362M1350 340L1348 362",
      ]}
    />
    <Zone
      x={540}
      y={1940}
      rings={[[563, 45, 27], [935, 8, 14], [618, 341, 11], [1550, 48, 16], [1510, 158, 34], [1182, 376, 14], [1479, 397, 17], [1140, 690, 18], [1075, 745, 12], [1494, 808, 30], [1010, 812, 45], [1010, 812, 18], [98, 790, 12]]}
      sparks={[[778, 800, 44, 0]]}
      paths={[
        "M0 20L35 0M265 0L280 18L265 45M300 45L355 40V25M390 45Q410 0 430 5Q460 20 485 45M680 30L760 0M765 0V45M770 0Q830 20 830 45M1010 0Q1010 30 1060 45M1170 0Q1180 30 1170 45M1460 45L1475 10L1500 15L1485 48M1450 190Q1490 300 1520 330L1568 345",
        "M30 362Q100 310 190 362M300 362Q340 300 400 362M380 362Q430 290 490 330Q550 330 555 362M350 350L365 325M705 325L712 362M760 350L790 340M860 350L1040 345Q1050 330 1040 325M1250 325Q1350 330 1400 370M1040 430Q1080 400 1090 420Q1085 390 1115 390Q1140 420 1125 490M1050 430Q1100 450 1105 485M1568 420Q1530 440 1530 500M1568 590L1520 700Q1510 715 1505 700L1540 600M1040 715Q1060 725 1085 712Q1105 715 1108 730L1125 800Q1130 820 1160 820M1180 735Q1200 790 1220 820M1290 790Q1280 810 1250 820M890 778L905 820M1568 740L1540 765L1568 790",
        "M260 815Q265 805 290 800L360 780Q385 790 370 800L300 820M500 800Q495 785 530 782M500 800L640 780M175 780L185 820M192 780L205 820M445 780L455 820M640 780L655 820",
      ]}
    />
    <Zone
      x={0}
      y={0}
      rings={[[10, 800, 18], [116, 803, 18], [234, 805, 33], [475, 802, 17], [727, 850, 20], [600, 870, 30], [1008, 845, 14], [1040, 868, 12]]}
      paths={["M350 830Q360 795 385 795Q420 800 425 830Q380 840 350 830ZM350 830Q305 845 310 870M425 830Q440 850 430 870M530 870Q530 845 560 845M650 870Q650 840 680 850M1310 870Q1320 840 1350 870M0 855Q40 850 55 870"]}
    />
    <Zone
      x={540}
      y={0}
      rings={[[90, 835, 32], [498, 862, 27], [850, 865, 15], [963, 864, 17], [1440, 840, 14], [1236, 868, 12], [1568, 835, 22], [1497, 790, 22]]}
      paths={["M190 870Q200 840 250 845M370 845Q430 840 460 870M680 840Q750 900 800 840M1085 840L1100 870L1165 850"]}
    />
    {/* left column, behind the short replies */}
    <Zone
      x={0}
      y={0}
      sx={1.4917}
      sy={1.4917}
      rings={[[12, 596, 6], [14, 720, 7], [22, 745, 4], [350, 806, 5], [372, 790, 6], [400, 815, 5], [320, 870, 5], [295, 878, 7], [345, 855, 4], [10, 1120, 8], [18, 1210, 4], [300, 1195, 6], [270, 1180, 4], [320, 1215, 4], [395, 1285, 5], [260, 1265, 5], [465, 455, 5], [370, 525, 5], [300, 510, 4]]}
      stars={[[15, 560, 8, 10], [280, 1205, 10, 15], [340, 470, 9, 0]]}
      sparks={[[14, 650, 12, 0], [380, 1140, 14, 5], [10, 1000, 12, 0], [404, 760, 12, 0]]}
      paths={[
        "M360 525L372 512Q380 510 384 516L408 545Q412 555 402 554L384 552ZM398 552L404 545M0 540L26 530L24 560M0 620Q16 610 28 630Q20 640 0 640M0 680Q14 660 26 670L20 690M0 790L14 780L24 800L8 815M4 850H20V870H4Z",
        "M290 825Q300 800 318 812Q335 825 325 842Q310 850 290 842ZM375 820H425V860M375 820V870H400M250 810L275 800L270 845",
        "M410 1255L440 1240L450 1275L420 1285ZM14 1270Q4 1290 14 1310L28 1300M0 1160L16 1150L24 1175L6 1185M340 1160Q330 1180 345 1195Q365 1195 362 1175Q360 1160 340 1160ZM0 1240L20 1235L26 1260L6 1262",
      ]}
    />
  </svg>
);

/* ---------- status bar ---------- */

const Signal = ({ dim }) => (
  <svg className="h-8 w-12 overflow-visible" viewBox="0 0 48 32" fill="#fff">
    <text x="0" y="16.5" fontFamily="Roboto" fontWeight="700" fontSize="20.5" textLength="24">4G</text>
    {dim && <path d="M0 24l4.500-6 4.500 6zM0 26h9l-4.500 6z" opacity=".25" />}
    <rect x="12" y="23" width="6" height="9" rx="2" />
    <rect x="21.5" y="22" width="6" height="10" rx="2" />
    <rect x="31" y="18" width="6" height="14" rx="2" />
    <rect x="41" y="15" width="6" height="17" rx="2" opacity={dim ? 0.25 : 1} />
  </svg>
);

const Alarm = () => (
  <svg className="h-[30px] w-[30px]" viewBox="0 0 30 30" fill="none">
    <path d="M2 8Q3 3 8 2M28 8Q27 3 22 2" stroke="#fff" strokeWidth="3" />
    <circle cx="15" cy="16" r="13.5" fill="#fff" />
    <path d="M14.500 8V17.500H22" stroke="#008069" strokeWidth="3" />
  </svg>
);

const StatusBar = () => (
  <div className="flex h-[120px] items-start pt-[44px] pl-[136px] text-white">
    <Signal dim />
    <div className="ml-3">
      <Signal />
    </div>
    <span className="mt-0.5 ml-[10px] w-[91px] text-[35.5px] leading-8 font-medium">4:33</span>
    <svg className="mt-0.5 h-7 w-7" viewBox="0 0 28 28">
      <circle cx="14" cy="14" r="14" fill="#fff" />
      <path d="M4.500 14L22 6.500L19 22L14 18.500L11.500 21.500L10.500 16.500L20 8.500L8.500 15.500Z" fill="#008069" />
    </svg>
    <div className="mt-px ml-4">
      <Alarm />
    </div>
    <span className="ml-[19px] w-[24px] font-['Noto_Sans'] text-[33px] leading-[38px] font-semibold">पे</span>
    <svg className="mt-1 ml-[20px] h-6 w-6" viewBox="0 0 24 24">
      <rect width="24" height="24" rx="6" fill="#0a99ff" />
      <circle cx="12" cy="12" r="10" fill="none" stroke="#fff" strokeWidth=".8" strokeDasharray="8 3" />
      <g fill="#fff">
        <circle cx="12.5" cy="7.5" r="3.2" />
        <circle cx="7.5" cy="15.5" r="2.7" />
        <circle cx="17" cy="15.5" r="2.7" />
      </g>
      <path d="M11 8L8 12M8 18Q12 20 16.500 18" stroke="#fff" strokeWidth="1.2" fill="none" />
    </svg>
    <svg className="mt-0.5 ml-[19px] h-7 w-7" viewBox="0 0 28 28">
      <path d="M14 0Q26 0 28 13Q28 26 15 28Q1 28 0 15Q0 2 14 0Z" fill="#fff" />
      <path d="M16 5Q10 3 10.500 12L11 24M6 14L14 12.500M21 12Q16 10 15 15Q15 20 21 19" fill="none" stroke="#008069" strokeWidth="1.6" strokeLinecap="round" />
    </svg>
    <div className="mt-px ml-[273px]">
      <Alarm />
    </div>
    <svg className="mt-0.5 ml-3 h-7 w-[38px]" viewBox="0 0 38 28" fill="#fff">
      <rect x="10.5" y="1.5" width="17" height="25" rx="2" fill="none" stroke="#fff" strokeWidth="3" />
      <rect x="13.5" y="5" width="11" height="18" opacity=".5" />
      <rect x="0" y="9" width="2.5" height="10" rx="1" />
      <rect x="5" y="6" width="2.5" height="16" rx="1" />
      <rect x="30.5" y="6" width="2.5" height="16" rx="1" />
      <rect x="35.5" y="9" width="2.5" height="10" rx="1" />
    </svg>
    <svg className="mt-px ml-3 h-[30px] w-[38px] overflow-visible" viewBox="0 0 38 30" fill="#fff" fontFamily="Inter" fontWeight="700">
      <text x="0" y="14.5" fontSize="16" textLength="20" fontWeight="600">Vo</text>
      <text x="-0.5" y="30" fontSize="16.5" textLength="27">LTE</text>
      <text x="27" y="30" fontSize="17" fontWeight="900" textLength="11">2</text>
      <path d="M19 5Q22 8 19.500 12M20 2Q26 7 22 13" fill="none" stroke="#fff" strokeWidth="1.5" />
    </svg>
    <svg className="mt-1 ml-[11px] h-7 w-[54px]" viewBox="0 0 54 28">
      <rect x="1" y="1" width="49.5" height="26" rx="5" fill="none" stroke="#fff" strokeWidth="2" />
      <rect x="4" y="4.5" width="10" height="19" fill="#fff" opacity=".35" />
      <rect x="52" y="9" width="2" height="9" fill="#fff" />
      <text x="16" y="20.5" fill="#fff" fontFamily="Roboto" fontWeight="700" fontSize="18.5" textLength="20">23</text>
    </svg>
  </div>
);

/* ---------- chat header ---------- */

const Header = () => (
  <header className="h-[264px] bg-[#008069] text-white">
    <StatusBar />
    <div className="flex items-center pt-[7px] pl-[25px]">
      <svg className="h-[50px] w-[48px]" viewBox="0 0 48 50" fill="none" stroke="#fff" strokeWidth="5.5">
        <path d="M25.500 2L3.500 25L25.500 48M3.500 25H48" />
      </svg>
      <svg className="ml-3 h-[105px] w-[105px]" viewBox="0 0 105 105">
        <clipPath id="avatar">
          <circle cx="52.5" cy="52.5" r="51" />
        </clipPath>
        <circle cx="52.5" cy="52.5" r="52.5" fill="#cfd8df" />
        <g clipPath="url(#avatar)" fill="#fff">
          <circle cx="52.5" cy="46" r="17.5" />
          <path d="M18 91Q26 70 52.500 70Q79 70 87 91Q75 106 52.500 106Q30 106 18 91Z" />
        </g>
      </svg>
      <h1 className="ml-[27px] w-[497px] text-[53.3px] leading-[64px] font-medium whitespace-nowrap">+880 1772-0780...</h1>
      <svg className="mt-1 h-10 w-[60px]" viewBox="0 0 60 40" fill="#fff">
        <rect width="44" height="40" rx="6.5" />
        <path d="M46.500 16L56 6.500Q60 4 60 9V31Q60 36 56 34L46.500 25Z" />
      </svg>
      <svg className="mt-1 ml-[87px] h-[54px] w-[54px]" viewBox="2.5 2.5 19 19" fill="#fff">
        <path d="M20 15.500c-1.250 0-2.450-.2-3.570-.570a1.020 1.020 0 0 0-1.020.240l-2.200 2.200a15.050 15.050 0 0 1-6.590-6.580l2.200-2.210c.280-.270.360-.660.250-1.010A11.360 11.360 0 0 1 8.500 4c0-.550-.450-1-1-1H4c-.550 0-1 .450-1 1 0 9.390 7.610 17 17 17 .550 0 1-.450 1-1v-3.500c0-.550-.450-1-1-1z" />
      </svg>
      <svg className="ml-[93px] h-12 w-3" viewBox="0 0 12 48" fill="#fff">
        <circle cx="6" cy="6" r="6" />
        <circle cx="6" cy="24" r="6" />
        <circle cx="6" cy="42" r="6" />
      </svg>
    </div>
  </header>
);

/* ---------- messages ---------- */

const Ticks = () => (
  <svg className="mb-1.5 ml-[13px] h-[30px] w-12" viewBox="0 0 48 30" fill="none" stroke="#079bdc" strokeWidth="3.8">
    <path d="M1.500 17L11.500 28L32 1.500M22 23.500L26.500 28L47 1.500" />
  </svg>
);

const Bubble = ({ msg }) => {
  if (msg.hidden) {
    return <div className="h-[91px] w-[864px] shrink-0 self-end rounded-[33px] bg-[#e7ffdb] shadow-[0_2px_2px_rgba(20,60,60,0.16)]" />;
  }
  return (
    <div
      className={clsx(
        "relative flex shrink-0 items-end rounded-[33px] pb-[10px] pl-[30px] shadow-[0_2px_2px_rgba(20,60,60,0.16)]",
        msg.out ? "self-end bg-[#e7ffdb] pr-[26px]" : "self-start bg-white pr-[25px]",
        msg.first ? "mt-[30px]" : "mt-2",
        msg.first && (msg.out ? "rounded-tr-none" : "rounded-tl-none"),
        msg.wide && "w-[864px]"
      )}
    >
      {msg.first && (
        <svg className={clsx("absolute top-0 h-[33px] w-[22px]", msg.out ? "-right-[21px] -scale-x-100" : "-left-[21px]")} viewBox="0 0 22 33">
          <path d="M22 0H6Q-1.500 1 1 9L21 33.500H22Z" fill={msg.out ? "#e7ffdb" : "#fff"} />
        </svg>
      )}
      <p className={clsx("mb-3 pt-[18px] text-[43.2px] leading-[51px] whitespace-pre text-[#111b21]", !msg.wide && (msg.out ? "mr-6" : "mr-[42px]"), msg.tracking)}>{msg.text}</p>
      <span
        className={clsx(
          "flex items-end text-[31.8px] leading-[38px] whitespace-nowrap text-[#667781]",
          msg.wide && "absolute right-[25px] bottom-[10px]"
        )}
      >
        {msg.time}
        {msg.out && <Ticks />}
      </span>
    </div>
  );
};

const Composer = () => (
  <div className="mt-[13px] flex shrink-0 items-start">
    <div className="mt-0.5 ml-[15px] flex h-[136px] w-[896px] items-center rounded-full bg-white shadow-[0_2px_2px_rgba(20,60,60,0.25)]">
      <svg className="mt-0.5 ml-8 h-16 w-16" viewBox="0 0 64 64" fill="#8696a0">
        <circle cx="32" cy="32" r="29.5" fill="none" stroke="#8696a0" strokeWidth="5" />
        <ellipse cx="23.5" cy="25" rx="4.3" ry="5.7" />
        <ellipse cx="40.5" cy="25" rx="4.3" ry="5.7" />
        <path d="M15 36Q32 38.500 49 36Q47 51 32 51Q17 51 15 36Z" />
        <path d="M19 40Q32 42.500 45 40Q43 43.500 32 43.500Q21 43.500 19 40Z" fill="#fff" />
      </svg>
      <span className="ml-[33px] h-[66px] w-1.5 bg-[#00a884]" />
      <span className="-ml-1.5 w-[532px] pt-[5px] text-[49px] leading-[58px] text-[#667781]">Message</span>
      <svg className="h-[58px] w-[63px]" viewBox="0 0 63 58" fill="none" stroke="#8696a0" strokeWidth="5" strokeLinecap="round">
        <path d="M34 5.500L56 28A17 17 0 0 1 33 51L6 24A12 12 0 0 1 22 5.500L44 29A8.500 8.500 0 0 1 32.500 38.500L19.500 21" />
      </svg>
      <svg className="ml-[71px] h-[56px] w-[59px]" viewBox="0 0 59 56">
        <path d="M11 8Q15 8 17 5Q20 0 25 0H35Q40 0 43 5Q44 8 48 8Q59 8 59 19V44Q59 55 48 55H11Q0 55 0 44V19Q0 8 11 8Z" fill="#8696a0" />
        <circle cx="29.5" cy="29" r="12.3" fill="none" stroke="#fff" strokeWidth="5" />
      </svg>
    </div>
    <div className="ml-[15px] flex h-[141px] w-[141px] items-center justify-center rounded-full bg-[#00a884] shadow-[0_4px_6px_rgba(20,60,60,0.35)]">
      <svg className="h-[62px] w-11" viewBox="0 0 44 62" fill="none" stroke="#fff" strokeWidth="6">
        <rect x="13" y="0" width="18" height="38" rx="9" fill="#fff" stroke="none" />
        <path d="M3 28.500V30A19 18.500 0 0 0 41 30V28.500M22 48V62" />
      </svg>
    </div>
  </div>
);

const NavBar = () => (
  <nav className="flex h-[126px] items-start bg-[#f6f8fb] pt-[41px] pl-[246px]">
    <svg className="mt-[3px] h-[40px] w-[50px]" viewBox="0 0 50 40" stroke="#8a8a8a" strokeWidth="4" strokeLinecap="round">
      <path d="M2 2H48M2 19H48M2 36H48" />
    </svg>
    <svg className="ml-[210px] h-[44px] w-[70px]" viewBox="0 0 70 44" fill="none" stroke="#8a8a8a" strokeWidth="4" strokeLinecap="round">
      <path d="M2 19L30 3.500Q35 1 40 3.500L68 19M14 25V36Q14 41 19 41H51Q56 41 56 36V25" />
    </svg>
    <svg className="ml-[222px] h-[42px] w-[51px]" viewBox="0 0 51 42" fill="none" stroke="#8a8a8a" strokeWidth="4" strokeLinecap="round">
      <path d="M4 8H45Q49 8 49 12V35Q49 39 45 39H10" />
      <path d="M1 8L14 .500V9.500Z" fill="#8a8a8a" stroke="none" />
    </svg>
  </nav>
);

const App = () => (
  <div className="flex h-[2340px] w-[1080px] flex-col overflow-hidden font-[Roboto,sans-serif]">
    <Header />
    <main className="relative h-[1950px] overflow-hidden bg-[#bce3e6]">
      <Wallpaper />
      <div className="relative flex flex-col">
        <div className="-mt-[75px] flex flex-col px-12">
          {messages.map((msg) => (
            <Bubble key={msg.id} msg={msg} />
          ))}
        </div>
        <Composer />
        <button className="absolute top-[1678px] left-[947px] flex h-[98px] w-[98px] items-center justify-center rounded-full bg-[#fafcfd]/90 shadow-[0_2px_4px_rgba(20,60,60,0.18)]">
          <svg className="mt-1 h-[34px] w-9" viewBox="0 0 36 34" fill="none" stroke="#667781" strokeWidth="4.2">
            <path d="M1.500 2L18 16L34.500 2M1.500 17.500L18 31.500L34.500 17.500" />
          </svg>
        </button>
      </div>
    </main>
    <NavBar />
  </div>
);

export default App;
